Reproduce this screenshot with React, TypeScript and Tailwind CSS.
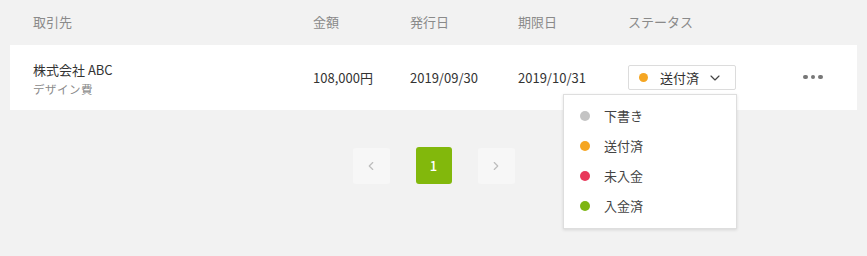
import { ChevronDown, ChevronLeft, ChevronRight } from "lucide-react";

type Status = { label: string; color: string };

const statuses: Status[] = [
  { label: "下書き", color: "bg-[#c4c4c4]" },
  { label: "送付済", color: "bg-[#f5a623]" },
  { label: "未入金", color: "bg-[#e8385a]" },
  { label: "入金済", color: "bg-[#7db513]" },
];

function StatusSelect() {
  return (
    <div className="relative w-[108px]">
      <div className="flex h-[25px] items-center rounded-[2px] border border-[#dcdcdc] bg-white pl-[10px] pr-[12px]">
        <span className="h-[9px] w-[9px] rounded-full bg-[#f5a623]" />
        <span className="ml-[12px] text-[13px] text-[#333]">送付済</span>
        <ChevronDown className="ml-auto h-[16px] w-[16px] text-[#444]" strokeWidth={1.75} />
      </div>
      <div className="absolute left-[-65px] top-[29px] z-10 w-[174px] border border-[#dedede] bg-white pb-[7px] pt-[6px] shadow-[0_1px_3px_rgba(0,0,0,0.12)]">
        {statuses.map((s) => (
          <div key={s.label} className="flex h-[30px] items-center pl-[16px]">
            <span className={`h-[10px] w-[10px] rounded-full ${s.color}`} />
            <span className="ml-[14px] text-[13px] text-[#444]">{s.label}</span>
          </div>
        ))}
      </div>
    </div>
  );
}

export default function App() {
  return (
    <div
      className="h-[256px] w-[867px] bg-[#f2f2f2] px-[10px]"
      style={{ fontFamily: '"Noto Sans CJK JP", "Noto Sans", sans-serif' }}
    >
      <div className="grid h-[45px] grid-cols-[280px_97px_108px_110px_1fr] items-center px-[23px] pb-[2px] text-[13px] text-[#8a8a8a]">
        <span>取引先</span>
        <span>金額</span>
        <span>発行日</span>
        <span>期限日</span>
        <span>ステータス</span>
      </div>

      <div className="grid h-[65px] grid-cols-[280px_97px_108px_110px_175px_1fr] items-center bg-white px-[23px] text-[13px] text-[#333]">
        <div className="flex flex-col pt-[4px]">
          <span className="leading-[18px]">株式会社 ABC</span>
          <span className="text-[11.5px] leading-[20px] tracking-[0.5px] text-[#8a8a8a]">デザイン費</span>
        </div>
        <span>108,000円</span>
        <span>2019/09/30</span>
        <span>2019/10/31</span>
        <StatusSelect />
        <div className="flex items-center gap-[3px] pb-[1px]">
          <span className="h-[4.5px] w-[4.5px] rounded-full bg-[#777]" />
          <span className="h-[4.5px] w-[4.5px] rounded-full bg-[#777]" />
          <span className="h-[4.5px] w-[4.5px] rounded-full bg-[#777]" />
        </div>
      </div>

      <div className="mt-[37px] flex items-center justify-center gap-[26px]">
        <button className="flex h-[36px] w-[37px] items-center justify-center rounded-[3px] bg-[#f7f7f7] text-[#bdbdbd]">
          <ChevronLeft className="h-[14px] w-[14px]" strokeWidth={2} />
        </button>
        <button className="flex h-[37px] w-[36px] items-center justify-center rounded-[3px] bg-[#82b80c] text-[13px] font-medium text-white">
          1
        </button>
        <button className="flex h-[36px] w-[37px] items-center justify-center rounded-[3px] bg-[#f7f7f7] text-[#bdbdbd]">
          <ChevronRight className="h-[14px] w-[14px]" strokeWidth={2} />
        </button>
      </div>
    </div>
  );
}
